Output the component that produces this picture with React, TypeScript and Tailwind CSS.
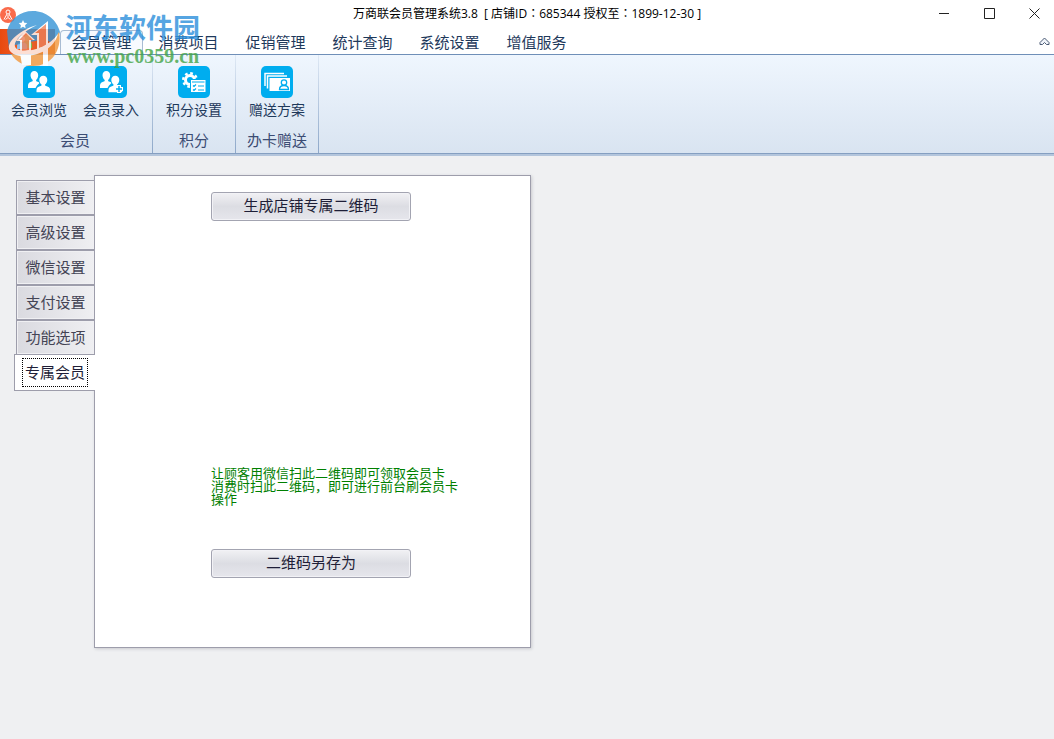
import { useState, type ReactNode } from "react";

const MENUS = ["会员管理", "消费项目", "促销管理", "统计查询", "系统设置", "增值服务"];

const SIDE_TABS = ["基本设置", "高级设置", "微信设置", "支付设置", "功能选项", "专属会员"];

interface RibbonItem {
  label: string;
  icon: ReactNode;
}

interface RibbonGroup {
  caption: string;
  items: RibbonItem[];
}

function Tile({ children }: { children: ReactNode }) {
  return (
    <svg viewBox="0 0 32 32" className="h-8 w-8" aria-hidden="true">
      <rect width="32" height="32" rx="5" fill="#00adef" />
      {children}
    </svg>
  );
}

function People() {
  return (
    <g fill="#fff">
      <path d="M5 22v-2.500c0-2.500 1.500-3.500 4.500-4.300l.3-1.200C8.500 13 7.500 11 7.500 9.200 7.500 6.700 9 5 11.300 5s3.900 1.700 3.900 4.200c0 1.800-.9 3.800-2.200 4.800l.3 1.200c1.500.4 2.700.9 3.500 1.500L14 19.500 12.500 22z" />
      <path
        d="M13.500 26.200v-2c0-2.500 1.600-3.500 4.800-4.400l.3-1.200c-1.400-1-2.300-2.900-2.300-4.600 0-2.500 1.500-4.200 4-4.200s4 1.700 4 4.200c0 1.700-.9 3.600-2.300 4.600l.3 1.200c3.200.9 4.900 1.900 4.900 4.400v2z"
        stroke="#00adef"
        strokeWidth="1.400"
        paintOrder="stroke"
      />
    </g>
  );
}

function BrowseIcon() {
  return (
    <Tile>
      <People />
    </Tile>
  );
}

function AddMemberIcon() {
  return (
    <Tile>
      <People />
      <path d="M24 19v8M20 23h8" stroke="#fff" strokeWidth="4" />
      <path d="M24 20v6M21 23h6" stroke="#00adef" strokeWidth="1.500" />
    </Tile>
  );
}

function PointsIcon() {
  return (
    <Tile>
      <circle cx="12" cy="14" r="4.500" fill="none" stroke="#fff" strokeWidth="3" />
      <circle cx="12" cy="14" r="6.800" fill="none" stroke="#fff" strokeWidth="2.400" strokeDasharray="2.700 2.640" />
      <rect x="12" y="13" width="16" height="13.500" fill="#00adef" />
      <rect x="13" y="14" width="14.500" height="12" fill="#fff" />
      <path d="M14 16h12.500" stroke="#00adef" strokeWidth="1" />
      <path d="M15 19.500l1 1 2-2M15 23.500l1 1 2-2M20 20h6M20 24h6" fill="none" stroke="#00adef" strokeWidth="1.200" />
    </Tile>
  );
}

function GiftIcon() {
  return (
    <Tile>
      <path d="M4 20V7.500h19" fill="none" stroke="#fff" strokeWidth="1.500" />
      <path d="M6.500 22.500V10h19.500" fill="none" stroke="#fff" strokeWidth="1.500" />
      <rect x="8.500" y="12" width="20.500" height="13" fill="#fff" />
      <circle cx="23" cy="16.500" r="2.700" fill="none" stroke="#00adef" strokeWidth="1.300" />
      <path d="M18.500 23.500c0-2.500 1.500-4 4.500-4s4.500 1.500 4.500 4z" fill="none" stroke="#00adef" strokeWidth="1.300" />
    </Tile>
  );
}

const GROUPS: RibbonGroup[] = [
  {
    caption: "会员",
    items: [
      { label: "会员浏览", icon: <BrowseIcon /> },
      { label: "会员录入", icon: <AddMemberIcon /> },
    ],
  },
  { caption: "积分", items: [{ label: "积分设置", icon: <PointsIcon /> }] },
  { caption: "办卡赠送", items: [{ label: "赠送方案", icon: <GiftIcon /> }] },
];

function WindowButton({ label, path }: { label: string; path: string }) {
  return (
    <button type="button" aria-label={label} className="flex h-[27px] w-10 items-center justify-center">
      <svg viewBox="0 0 11 11" className="h-[11px] w-[11px]" fill="none" stroke="#222">
        <path d={path} />
      </svg>
    </button>
  );
}

function TitleBar() {
  return (
    <header className="grid h-[29px] grid-cols-[1fr_auto_1fr] items-start bg-white">
      <svg viewBox="0 0 16 16" className="mt-[7px] h-4 w-4" aria-hidden="true">
        <circle cx="8" cy="8" r="8" fill="#fa6b4b" />
        <circle cx="8" cy="5" r="2" fill="none" stroke="#fff" />
        <path d="M7 7l-3 5.500M9 7l3 5.500M8 8v2M5.500 12.500l2.500-2 2.500 2" fill="none" stroke="#fff" />
      </svg>
      <h1 className="whitespace-pre font-['Open_Sans','Noto_Sans_CJK_TC',sans-serif] text-[12px] font-normal leading-7 text-black">
        万商联会员管理系统3.8{"  "}[ 店铺ID：685344 授权至：1899-12-30 ]
      </h1>
      <div className="flex justify-end gap-[5px]">
        <WindowButton label="最小化" path="M0 5.500h10" />
        <WindowButton label="最大化" path="M.5.500h10v10h-10z" />
        <WindowButton label="关闭" path="M.5.500l10 10M10.500.500l-10 10" />
      </div>
    </header>
  );
}

function MenuBar() {
  const [active, setActive] = useState(0);

  return (
    <nav className="flex h-[26px] border-b border-[#6f8fb8] bg-white">
      <button
        type="button"
        aria-label="主菜单"
        className="mr-[5px] flex w-[55px] shrink-0 items-center justify-end bg-linear-to-r from-[#e8490f] via-[#f2622a] to-[#c94b1c] pr-[22px]"
      >
        <svg viewBox="0 0 16 16" className="h-4 w-4">
          <circle cx="10" cy="4" r="3" fill="#a9d36b" />
          <path d="M5 14V10c0-4 10-4 10 0v4z" fill="#7cbb4d" />
          <circle cx="5" cy="5" r="3" fill="#e6f1fb" />
          <path d="M0 15v-3c0-5 10-5 10 0v3z" fill="#8fc0ec" />
        </svg>
      </button>
      {MENUS.map((menu, index) => (
        <button
          key={menu}
          type="button"
          onClick={() => setActive(index)}
          className={`mr-1 mt-px w-[83px] shrink-0 rounded-t-sm border border-b-0 text-[15px] leading-6 text-[#1e395b] ${
            index === active ? "border-[#a9bcd3] bg-[#f7fafe]" : "border-transparent"
          }`}
        >
          {menu}
        </button>
      ))}
      <button type="button" aria-label="折叠功能区" className="ml-auto mr-1 flex items-start pt-2">
        <svg viewBox="0 0 11 9" className="h-[9px] w-[11px]" fill="#f0f4fa" stroke="#4a5a74">
          <path d="M1 5.500L5.500 1 10 5.500V7.500H7.500L5.500 5.500 3.500 7.500H1z" />
        </svg>
      </button>
    </nav>
  );
}

function Ribbon() {
  return (
    <section className="border-b-2 border-[#b3c5dc]">
      <div className="flex h-[99px] border-b border-[#859fc1] bg-linear-to-b from-[#eff6fe] to-[#d9e4f1]">
        {GROUPS.map((group) => (
          <div key={group.caption} className="flex first:pl-[3px]">
            <div className="flex flex-col">
              <div className="flex">
                {group.items.map((item) => (
                  <button
                    key={item.label}
                    type="button"
                    className="flex min-w-[72px] flex-col items-center px-1 pt-[11px] text-[14px] leading-6 text-[#1e395b] only:w-[82px]"
                  >
                    {item.icon}
                    {item.label}
                  </button>
                ))}
              </div>
              <div className="mt-[7px] text-center text-[15px] leading-6 text-[#3b4c73]">{group.caption}</div>
            </div>
            <div
              className={`w-px bg-linear-to-b from-[#dfe9f5] to-[#8ea8c9] ${
                group.items.length > 1 ? "ml-[5px]" : ""
              }`}
            />
          </div>
        ))}
      </div>
    </section>
  );
}

function PanelButton({ children }: { children: ReactNode }) {
  return (
    <button
      type="button"
      className="h-[29px] w-[200px] rounded-[3px] border border-[#a3a4b1] bg-linear-to-b from-[#f1f1f4] via-[#dcdde3] to-[#e6e6ec] pb-px text-[15px] leading-6 text-[#1e1e37] shadow-[inset_0_0_0_1px_#f2f2f6]"
    >
      {children}
    </button>
  );
}

function Settings() {
  const [active, setActive] = useState(5);

  return (
    <main className="flex flex-1 items-start pl-[14px] pt-[19px]">
      <div role="tablist" aria-orientation="vertical" className="z-10 -mr-px flex w-[81px] flex-col pt-[5px]">
        {SIDE_TABS.map((tab, index) => (
          <button
            key={tab}
            type="button"
            role="tab"
            aria-selected={index === active}
            onClick={() => setActive(index)}
            className={
              index === active
                ? "-mt-px h-[37px] border border-r-0 border-[#9d9dab] bg-white px-[7px] text-[15px] leading-[27px] text-[#1e1e37]"
                : "ml-0.5 h-[35px] border border-[#9d9dab] bg-linear-to-r from-[#dadae0] to-[#efeff2] text-[15px] leading-8 text-[#444455] shadow-[inset_0_0_0_1px_#f0f0f3]"
            }
          >
            {index === active ? <span className="block border border-dotted border-black">{tab}</span> : tab}
          </button>
        ))}
      </div>
      <div
        role="tabpanel"
        className="flex w-[437px] flex-col items-start border border-[#9d9dab] bg-white pb-[69px] pl-[116px] pt-4 shadow-[1px_1px_3px_#c8c9ce]"
      >
        <PanelButton>生成店铺专属二维码</PanelButton>
        <p className="mb-[43px] mt-[246px] text-[13px] leading-[13px] text-[#008000]">
          让顾客用微信扫此二维码即可领取会员卡
          <br />
          消费时扫此二维码，即可进行前台刷会员卡
          <br />
          操作
        </p>
        <PanelButton>二维码另存为</PanelButton>
      </div>
    </main>
  );
}

function Watermark() {
  return (
    <div className="pointer-events-none absolute left-[5px] top-[11px] z-20 flex gap-1 opacity-80">
      <svg viewBox="0 0 56 56" className="h-14 w-14" aria-hidden="true">
        <path d="M2 20C5 8 15 0 28 0c13 0 24 9 27 21L50 34 40 28 10 34 4 38z" fill="#3594d6" />
        <path d="M6 43C15 43 36 40 49 29l5-8c3 15-5 34-26 34-9 0-17-4-22-12z" fill="#f2973a" />
        <path d="M15 42V30h-4l9-10 10 9h-4v25h-9z" fill="#fff" />
        <path d="M32 42V24h-6L43 10v45h-5V40z" fill="#fff" />
        <path d="M17 40V29h-3l7-7 7 7h-4v10zM34 37V22h-4l11-9v22z" fill="#ee8058" />
        <path d="M5 40C0 33 12 20 32 14 12 24 6 34 12 38c8 5 30 0 41-15-4 15-20 22-34 22-7 0-12-2-14-5z" fill="#fff" />
        <path d="M18 9l1.300 2.700 3 .4-2.200 2.100.5 3-2.600-1.400-2.600 1.400.5-3-2.200-2.100 3-.4z" fill="#fff" />
      </svg>
      <div className="flex flex-col pt-1">
        <span className="text-[27px] font-bold leading-7 text-[#2c8fdb]">河东软件园</span>
        <span className="pl-0.5 font-['Liberation_Serif',serif] text-[20px] font-bold leading-[26px] text-[#43a447]">
          www.pc0359.cn
        </span>
      </div>
    </div>
  );
}

export default function App() {
  return (
    <div className="relative flex min-h-screen flex-col bg-[#eff0f2] font-['Liberation_Sans','Noto_Sans_CJK_SC',sans-serif]">
      <TitleBar />
      <MenuBar />
      <Ribbon />
      <Settings />
      <Watermark />
    </div>
  );
}
